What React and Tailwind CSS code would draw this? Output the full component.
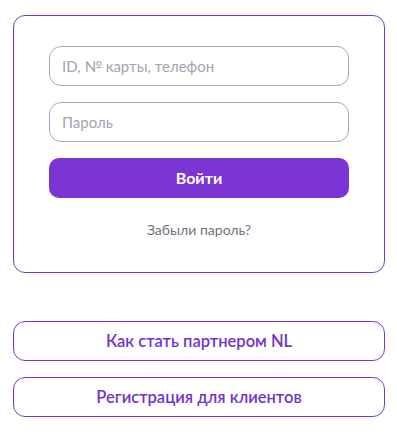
import React from "react";

const font = { fontFamily: "Lato, 'Noto Sans', sans-serif" };

const Field = ({ placeholder, type = "text" }) => (
	<input
		type={type}
		placeholder={placeholder}
		className="h-[40px] w-full rounded-[12px] border border-[#aaa6b9] bg-white px-[12px] text-[15px] text-[#3b3b4a] outline-none placeholder:text-[#a3a3b0]"
	/>
);

const OutlineLink = ({ children }) => (
	<button className="flex h-[40px] w-full items-center justify-center rounded-[12px] border border-[#7b35d4] bg-white text-[16.5px] font-semibold text-[#7133d0]">
		{children}
	</button>
);

export default function App() {
	return (
		<div className="min-h-[435px] bg-white pl-[13px] pr-[12px] pt-[15px]" style={font}>
			{/* login card */}
			<div className="flex h-[258px] flex-col rounded-[12px] border border-[#7b35d4] px-[35px] pt-[30px]">
				<div className="flex flex-col gap-[16px]">
					<Field placeholder="ID, № карты, телефон" />
					<Field placeholder="Пароль" type="password" />
					<button className="h-[40px] w-full rounded-[10px] bg-[#7b35d4] text-[16px] font-bold text-white">
						Войти
					</button>
				</div>
				<div className="mt-[21px] text-center text-[14px] text-[#6f6f80]">
					Забыли пароль?
				</div>
			</div>

			<div className="mt-[48px] flex flex-col gap-[16px]">
				<OutlineLink>Как стать партнером NL</OutlineLink>
				<OutlineLink>Регистрация для клиентов</OutlineLink>
			</div>
		</div>
	);
}
